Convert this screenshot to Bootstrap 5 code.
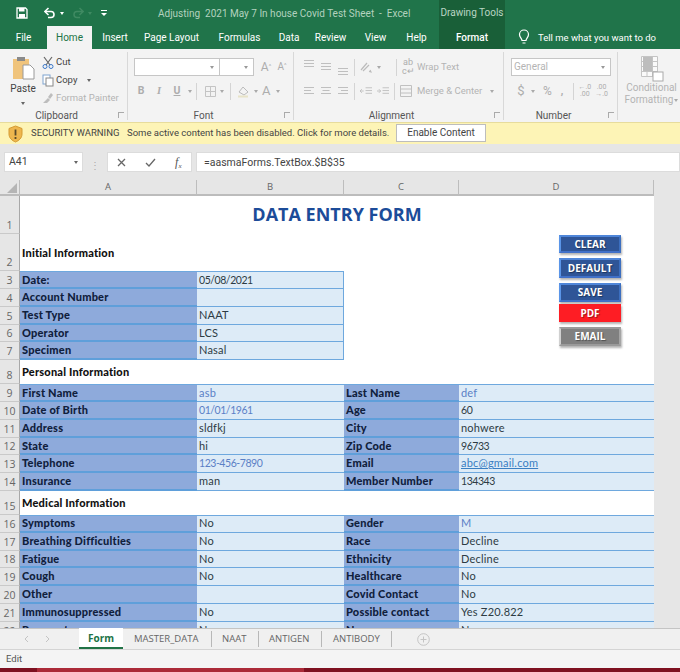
<!DOCTYPE html>
<html lang="en">
<head>
<meta charset="UTF-8">
<title>Adjusting 2021 May 7 In house Covid Test Sheet - Excel</title>
<link href="https://cdn.jsdelivr.net/npm/bootstrap@5.3.0/dist/css/bootstrap.min.css" rel="stylesheet">
<style>
  html, body { width: 680px; height: 672px; overflow: hidden; }
  body { font-family: Roboto, "Liberation Sans", sans-serif; font-size: 10px; color: #444; background: #e6e6e6; }
  svg { display: block; flex: none; }

  /* title + tabs */
  .xl-head { background: #20744a; color: #fff; height: 49px; }
  .xl-title { height: 26px; }
  .xl-qat { width: 439px; padding-left: 16px; }
  .xl-doc { color: #b3d2bf; font-size: 10px; margin-left: 50px; white-space: nowrap; }
  .xl-ctx { width: 66px; background: #195f38; color: #b9d5c4; font-size: 10px; text-align: center; line-height: 26px; white-space: nowrap; }
  .xl-tabs { height: 23px; font-size: 10px; }
  .xl-tab { line-height: 23px; text-align: center; flex: none; white-space: nowrap; }
  .xl-tab-on { background: #f3f3f3; color: #217346; }
  .xl-tab-ctx { background: #195f38; font-weight: 500; }
  .xl-bulb { margin-left: 13px; margin-top: 3px; }
  .xl-ask { font-size: 9.5px; }

  /* ribbon */
  .xl-ribbon { height: 73px; background: #f3f3f3; overflow: hidden; }
  .xl-group { position: relative; flex: none; height: 68px; margin-top: 3px; border-right: 1px solid #d8d8d8; }
  .xl-group-last { border-right: 0; }
  .xl-glabel { position: absolute; left: 0; right: 14px; top: 57px; text-align: center; font-size: 10px; color: #555; line-height: 14px; }
  .xl-launch { position: absolute; right: 3px; top: 60px; width: 6px; height: 6px; border-left: 1px solid #aaa; border-top: 1px solid #aaa; }
  .xl-off { color: #b4b4b4; }
  .xl-field { background: #fff; border: 1px solid #c6c6c6; height: 18px; position: relative; flex: none; }
  .xl-field::after { content: ""; position: absolute; right: 5px; top: 7px; border: 2.5px solid transparent; border-top: 3px solid #999; }
  .xl-rowtool { height: 18px; white-space: nowrap; }
  .xl-row2 { margin-top: 6px; }
  .xl-caret { flex: none; width: 0; height: 0; border: 2.5px solid transparent; border-top: 3px solid #a9a9a9; margin-top: 3px; }
  .xl-vsep { flex: none; width: 1px; height: 17px; background: #d4d4d4; }
  .xl-glyph { flex: none; color: #adadad; font-weight: 700; font-size: 10.5px; line-height: 18px; text-align: center; }
  .xl-clip-left { width: 38px; padding-top: 4px; }
  .xl-clip-items { padding-top: 1px; }
  .xl-clip-item { height: 18px; font-size: 9.5px; line-height: 18px; white-space: nowrap; gap: 2px; }
  .xl-align-tools { gap: 5px; }
  .xl-big { line-height: 12px; font-size: 10px; padding-left: 5px; white-space: nowrap; }
  .xl-big .xl-caret { display: inline-block; vertical-align: middle; margin: 2px 0 0 1px; }

  /* warning + formula */
  .xl-warn { height: 22px; background: #fdf4b6; font-size: 9.5px; color: #444; padding-left: 8px; border-top: 1px solid #e7dc9c; white-space: nowrap; }
  .xl-enable { width: 90px; height: 18px; line-height: 16px; background: #fff; border: 1px solid #bdbdbd; text-align: center; font-size: 10px; position: absolute; left: 396px; top: 124px; }
  .xl-formula { height: 36px; padding-top: 8px; background: #e6e6e6; }
  .xl-fbox { background: #fff; height: 20px; line-height: 20px; border: 1px solid #dcdcdc; font-size: 10.5px; flex: none; }
  .xl-ftext { padding-left: 7px; color: #444; }

  /* sheet */
  .xl-sheet-wrap { position: relative; height: 448px; overflow: hidden; }
  .xl-grid { table-layout: fixed; border-collapse: separate; border-spacing: 0; width: 654px; font-family: "Lato", "Liberation Sans", sans-serif; font-size: 11px; color: #222; }
  .xl-grid th { background: #e6e6e6; font-weight: 400; color: #666; text-align: center; font-family: "Open Sans", sans-serif; font-size: 9.5px; }
  .xl-grid thead th { height: 15px; padding: 0; border-right: 1px solid #bdbdbd; border-bottom: 2px solid #bcbcbc; }
  .xl-grid tbody th { vertical-align: bottom; padding: 0 0 1px; border-bottom: 1px solid #c9c9c9; border-right: 1px solid #a8a8a8; line-height: 13px; font-size: 10.5px; }
  .xl-grid td { padding: 0 2px; height: 17.8px; line-height: 14px; background: #fff; white-space: nowrap; overflow: hidden; letter-spacing: .2px; }
  .xl-grid td.xl-val { padding-bottom: 1px; }
  .xl-lbl { background: #8eaadb !important; font-weight: 900; color: #10203c; border-bottom: 2px solid #5f9fda; }
  .xl-val { background: #ddebf7 !important; border-bottom: 1px solid #6ea8de; color: #2d3b44; }
  .xl-val-b { border-right: 1px solid #6ea8de; }
  .xl-top td.xl-lbl, .xl-top td.xl-val { border-top: 1px solid #6ea8de; }
  .xl-blue { color: #5b80c6; }
  .xl-num { font-size: 10.5px; letter-spacing: -.45px !important; }
  .xl-sec { font-weight: 900; color: #111; }
  .xl-grid td.xl-h { text-align: center; font-size: 18px; font-weight: 700; color: #1c4c99; font-family: "Open Sans", sans-serif; letter-spacing: 0; padding-bottom: 2px; }
  .xl-mail { color: #3a7ec2; text-decoration: underline; }
  .xl-corner { position: absolute; left: 7px; top: 3px; border: 5px solid transparent; border-right-color: #b5b5b5; border-bottom-color: #b5b5b5; }
  .xl-side { position: absolute; left: 654px; right: 0; top: 0; bottom: 0; background: #e6e6e6; }

  /* form macro buttons float above the cells */
  .xl-mbtn { position: absolute; left: 559px; width: 62px; color: #fff; font-family: "Open Sans", sans-serif; font-size: 10px; font-weight: 700; text-align: center; text-shadow: 1px 1px 1px rgba(0,0,0,.4); border: 2px solid; border-color: #4f86d9 #3c6fc0 #4070c8 #5a95e8; background: #2f5597; box-shadow: 1px 2px 2px rgba(0,0,0,.3); }
  .xl-mbtn-red { background: #fe1d24; border-color: #fe1d24; }
  .xl-mbtn-gray { background: #808080; border-color: #9a9a9a #a5a5a5 #9a9a9a #d0d0d0; }

  /* sheet tabs + status */
  .xl-sheets { height: 22px; background: #f0f0f0; border-top: 1px solid #c4c4c4; border-bottom: 1px solid #d4d4d4; font-family: "Open Sans", sans-serif; font-size: 9.5px; color: #666; white-space: nowrap; }
  .xl-sheet-tab { height: 16px; line-height: 16px; flex: none; border-right: 1px solid #b8b8b8; }
  .xl-sheet-on { width: 44px; height: 21px; line-height: 20px; background: #fff; border-bottom: 2px solid #217346; color: #217346; font-weight: 700; font-size: 10px; text-align: center; margin-top: -1px; flex: none; }
  .xl-status { height: 18px; background: #f4f4f4; font-size: 9.5px; line-height: 18px; padding-left: 6px; color: #555; }
  .xl-strip { height: 4px; background: #7e1020; }
  .xl-strip-on { margin-left: 37px; width: 267px; height: 4px; background: #ab2a38; }
</style>
</head>
<body>

<div class="xl-head">
  <div class="xl-title d-flex align-items-center">
    <div class="xl-qat d-flex align-items-center">
      <svg width="12" height="12" viewBox="0 0 12 12"><path d="M1 1h8.500L11 2.500V11H1z" fill="none" stroke="#fff" stroke-width="1.300"/><rect x="3" y="1" width="5.500" height="3.500" fill="#fff"/><rect x="3" y="7" width="6" height="4" fill="#fff"/></svg>
      <svg class="ms-3" width="12" height="12" viewBox="0 0 12 12"><path d="M1.500 4.500H7a3 3 0 0 1 0 6H4" fill="none" stroke="#fff" stroke-width="1.600"/><path d="M4.500 1 .8 4.500 4.500 8" fill="none" stroke="#fff" stroke-width="1.600"/></svg>
      <span class="xl-caret ms-1" style="border-top-color:#fff"></span>
      <svg class="ms-2" width="12" height="12" viewBox="0 0 12 12"><path d="M10.500 4.500H5a3 3 0 0 0 0 6h3M7.500 1l3.700 3.500L7.500 8" fill="none" stroke="#3f8a62" stroke-width="1.500"/></svg>
      <span class="xl-caret ms-1" style="border-top-color:#3f8a62"></span>
      <svg class="ms-2" width="8" height="8" viewBox="0 0 8 8"><path d="M1 1.500h6" stroke="#fff"/><path d="M1 4h6L4 7z" fill="#fff"/></svg>
      <span class="xl-doc">Adjusting&nbsp; 2021 May 7 In house Covid Test Sheet&nbsp; -&nbsp; Excel</span>
    </div>
    <div class="xl-ctx">Drawing Tools</div>
  </div>
  <div class="xl-tabs d-flex">
    <div class="xl-tab" style="width:47px">File</div>
    <div class="xl-tab xl-tab-on" style="width:45px">Home</div>
    <div class="xl-tab" style="width:46px">Insert</div>
    <div class="xl-tab" style="width:67px">Page Layout</div>
    <div class="xl-tab" style="width:69px">Formulas</div>
    <div class="xl-tab" style="width:30px">Data</div>
    <div class="xl-tab" style="width:53px">Review</div>
    <div class="xl-tab" style="width:37px">View</div>
    <div class="xl-tab" style="width:45px">Help</div>
    <div class="xl-tab xl-tab-ctx" style="width:66px">Format</div>
    <svg class="xl-bulb" width="12" height="16" viewBox="0 0 12 16"><path d="M4 11.500C4 9.500 1.500 8.500 1.500 5.500a4.500 4.500 0 0 1 9 0c0 3-2.500 4-2.500 6z M4.500 14h3" fill="none" stroke="#fff" stroke-width="1.200"/></svg>
    <div class="xl-tab xl-ask ms-2">Tell me what you want to do</div>
  </div>
</div>

<div class="xl-ribbon d-flex">
  <!-- clipboard -->
  <div class="xl-group d-flex" style="width:128px">
    <div class="xl-clip-left d-flex flex-column align-items-center ms-1">
      <svg width="23" height="24" viewBox="0 0 23 24"><rect x="1" y="3" width="16" height="20" fill="#f0c47c"/><rect x="5" y="1" width="8" height="4" fill="#8a8a8a"/><path d="M11 9h7l4 4v10H11z" fill="#fff" stroke="#9a9a9a"/></svg>
      <span class="mt-1 lh-1">Paste</span>
      <span class="xl-caret mt-2" style="border-top-color:#666"></span>
    </div>
    <div class="xl-clip-items">
      <div class="xl-clip-item d-flex align-items-center"><svg width="12" height="13" viewBox="0 0 12 13"><path d="M2 1l6 8M10 1 4 9" stroke="#666" stroke-width="1.200"/><circle cx="3" cy="10.500" r="2" fill="none" stroke="#3c78c8"/><circle cx="9" cy="10.500" r="2" fill="none" stroke="#3c78c8"/></svg>Cut</div>
      <div class="xl-clip-item d-flex align-items-center"><svg width="12" height="13" viewBox="0 0 12 13"><rect x="1" y="1" width="7" height="9" fill="#fff" stroke="#7fa4cf"/><rect x="4" y="4" width="7" height="8" fill="#fff" stroke="#888"/></svg>Copy<span class="xl-caret ms-2" style="border-top-color:#666"></span></div>
      <div class="xl-clip-item d-flex align-items-center xl-off"><svg width="12" height="12" viewBox="0 0 12 12"><path d="M1 11l5-5 2 2-3 3zM6 5l3-4 2 2-3 4z" fill="#bdbdbd"/></svg>Format Painter</div>
    </div>
    <div class="xl-glabel">Clipboard</div><div class="xl-launch"></div>
  </div>
  <!-- font -->
  <div class="xl-group" style="width:166px;padding:6px 0 0 6px">
    <div class="d-flex align-items-center">
      <div class="xl-field" style="width:86px"></div><div class="xl-field" style="width:34px;border-left:0"></div>
      <span class="xl-glyph ms-1 xl-off" style="font-size:12px;font-weight:400;width:16px">A<sup style="font-size:6px">^</sup></span>
      <span class="xl-glyph xl-off" style="font-size:10px;font-weight:400;width:16px">A<sup style="font-size:6px">^</sup></span>
    </div>
    <div class="xl-rowtool xl-row2 d-flex align-items-center">
      <span class="xl-glyph" style="width:14px">B</span>
      <span class="xl-glyph fst-italic ms-1" style="width:14px;font-family:'Liberation Serif',serif">I</span>
      <span class="xl-glyph text-decoration-underline ms-1" style="width:14px">U</span>
      <span class="xl-caret ms-1"></span>
      <span class="xl-vsep ms-1"></span>
      <svg class="ms-2" width="11" height="11" viewBox="0 0 11 11"><path d="M.5.500h10v10H.5zM5.500.500v10M.5 5.500h10" fill="none" stroke="#c4c4c4"/></svg>
      <span class="xl-caret ms-1"></span>
      <span class="xl-vsep" style="margin-left:6px"></span>
      <svg style="margin-left:6px" width="13" height="13" viewBox="0 0 13 13"><path d="M2 7l4-5 5 5-4 3z" fill="none" stroke="#bbb"/><rect x="1" y="10.500" width="10" height="2" fill="#e8e3c8"/></svg>
      <span class="xl-caret ms-1"></span>
      <span class="xl-glyph ms-1" style="font-size:13px;font-weight:400">A</span>
      <span class="xl-caret" style="margin-left:6px"></span>
    </div>
    <div class="xl-glabel">Font</div><div class="xl-launch"></div>
  </div>
  <!-- alignment -->
  <div class="xl-group" style="width:210px;padding:6px 0 0 9px">
    <div class="xl-rowtool xl-align-tools d-flex align-items-center">
      <svg width="12" height="18" viewBox="0 0 12 18"><path d="M1 2.500h10M1 5.500h10M1 8.500h10" stroke="#bfbfbf"/></svg>
      <svg width="12" height="18" viewBox="0 0 12 18"><path d="M1 5.500h10M1 8.500h10M1 11.500h10" stroke="#bfbfbf"/></svg>
      <svg width="12" height="18" viewBox="0 0 12 18"><path d="M1 10.500h10M1 13.500h10M1 16.500h10" stroke="#bfbfbf"/></svg>
      <span class="xl-vsep"></span>
      <svg width="12" height="12" viewBox="0 0 12 12"><path d="M1 9l6-7M3 10l6-6M10 9l1 2-2-.500" fill="none" stroke="#bbb" stroke-width="1.200"/></svg>
      <span class="xl-caret"></span>
      <span class="xl-vsep" style="margin-left:10px"></span>
      <span class="xl-glyph" style="font-size:9px;line-height:9px;font-weight:400;width:12px">ab<br>c↵</span>
      <span class="xl-off" style="margin-left:-2px;font-size:9.5px">Wrap Text</span>
    </div>
    <div class="xl-rowtool xl-row2 xl-align-tools d-flex align-items-center">
      <svg width="12" height="10" viewBox="0 0 12 10"><path d="M1 1.500h10M1 4.500h7M1 7.500h10" stroke="#bfbfbf"/></svg>
      <svg width="12" height="10" viewBox="0 0 12 10"><path d="M1 1.500h10M2.500 4.500h7M1 7.500h10" stroke="#bfbfbf"/></svg>
      <svg width="12" height="10" viewBox="0 0 12 10"><path d="M1 1.500h10M4 4.500h7M1 7.500h10" stroke="#bfbfbf"/></svg>
      <span class="xl-vsep"></span>
      <svg width="12" height="10" viewBox="0 0 13 10"><path d="M6 1.500h7M6 4.500h7M6 7.500h7M4 5H0m2-2L0 5l2 2" fill="none" stroke="#bfbfbf"/></svg>
      <svg width="12" height="10" viewBox="0 0 13 10"><path d="M6 1.500h7M6 4.500h7M6 7.500h7M0 5h4M2 3l2 2-2 2" fill="none" stroke="#bfbfbf"/></svg>
      <span class="xl-vsep"></span>
      <svg width="12" height="12" viewBox="0 0 12 12"><path d="M.5.500h11v11H.5zM.5 4h11M.5 8h11" fill="none" stroke="#c0c0c0"/></svg>
      <span class="xl-off" style="font-size:9.5px">Merge &amp; Center</span>
      <span class="xl-caret" style="margin-left:3px"></span>
    </div>
    <div class="xl-glabel">Alignment</div><div class="xl-launch"></div>
  </div>
  <!-- number -->
  <div class="xl-group" style="width:114px;padding:6px 0 0 7px">
    <div class="xl-field xl-off" style="width:100px;padding-left:2px;line-height:16px;font-size:10px">General</div>
    <div class="xl-rowtool xl-row2 d-flex align-items-center ps-1">
      <span class="xl-glyph" style="font-size:13px;font-weight:400;width:12px">$</span>
      <span class="xl-caret ms-1"></span>
      <span class="xl-glyph ms-2" style="font-size:12px;font-weight:400">%</span>
      <span class="xl-glyph" style="margin-left:9px">,</span>
      <span class="xl-vsep" style="margin-left:10px"></span>
      <span class="xl-glyph ms-1" style="font-size:7px;line-height:7px;font-weight:400">←.0<br>.00</span>
      <span class="xl-glyph ms-1" style="font-size:7px;line-height:7px;font-weight:400">.00<br>→.0</span>
    </div>
    <div class="xl-glabel">Number</div><div class="xl-launch"></div>
  </div>
  <!-- conditional formatting, cut off by the window -->
  <div class="xl-group xl-group-last xl-big flex-grow-1 text-center xl-off pt-1">
    <svg class="mx-auto" width="24" height="26" viewBox="0 0 24 26"><path d="M1.500.500h16v20h-16zM1.500 5.500h16M1.500 10.500h16M1.500 15.500h16M7 .5v20M12.500.5v20" fill="#fafafa" stroke="#c4c4c4"/><rect x="3" y="1" width="9" height="14" fill="#bdbdbd"/><rect x="13" y="16" width="10" height="9" fill="#fff" stroke="#aaa"/></svg>
    <div>Conditional</div>
    <div>Formatting<span class="xl-caret"></span></div>
  </div>
</div>

<div class="xl-warn d-flex align-items-center">
  <svg width="15" height="18" viewBox="0 0 15 18"><path d="M7.500 1 14 3.500V9c0 4-3 6.500-6.500 8C4 15.500 1 13 1 9V3.500z" fill="#eeb64e" stroke="#d49b33"/><rect x="6.600" y="4.500" width="1.800" height="6" fill="#5a4a2a"/><rect x="6.600" y="12" width="1.800" height="2" fill="#5a4a2a"/></svg>
  <span class="ms-2" style="width:96px">SECURITY WARNING</span>
  <span>Some active content has been disabled. Click for more details.</span>
</div>
<div class="xl-enable">Enable Content</div>

<div class="xl-formula d-flex">
  <div class="xl-fbox d-flex justify-content-between align-items-center ms-1 px-1" style="width:79px">A41<span class="xl-caret" style="border-top-color:#666"></span></div>
  <div class="d-flex align-items-center justify-content-center" style="width:24px;color:#aaa;line-height:1">⋮</div>
  <div class="xl-fbox d-flex align-items-center justify-content-around" style="width:85px">
    <svg width="9" height="9" viewBox="0 0 9 9"><path d="M1 1l7 7M8 1 1 8" stroke="#666" stroke-width="1.300"/></svg>
    <svg width="11" height="9" viewBox="0 0 11 9"><path d="M1 5l3 3 6-7" fill="none" stroke="#666" stroke-width="1.300"/></svg>
    <span class="fst-italic" style="font-family:'Liberation Serif',serif;font-size:12px;color:#555">f<sub style="font-size:7px">x</sub></span>
  </div>
  <div class="xl-fbox xl-ftext flex-grow-1 ms-1">=aasmaForms.TextBox.$B$35</div>
</div>

<div class="xl-sheet-wrap">
  <table class="xl-grid">
    <colgroup><col style="width:20px"><col style="width:177px"><col style="width:147px"><col style="width:115px"><col style="width:195px"></colgroup>
    <thead><tr><th></th><th>A</th><th>B</th><th>C</th><th>D</th></tr></thead>
    <tbody>
      <tr><th style="height:38px">1</th><td colspan="4" class="xl-h">DATA ENTRY FORM</td></tr>
      <tr><th style="height:37px">2</th><td colspan="4" class="xl-sec">Initial Information</td></tr>
      <tr class="xl-top"><th>3</th><td class="xl-lbl">Date:</td><td class="xl-val xl-val-b xl-num">05/08/2021</td><td colspan="2"></td></tr>
      <tr><th>4</th><td class="xl-lbl">Account Number</td><td class="xl-val xl-val-b"></td><td colspan="2"></td></tr>
      <tr><th>5</th><td class="xl-lbl">Test Type</td><td class="xl-val xl-val-b">NAAT</td><td colspan="2"></td></tr>
      <tr><th>6</th><td class="xl-lbl">Operator</td><td class="xl-val xl-val-b">LCS</td><td colspan="2"></td></tr>
      <tr><th>7</th><td class="xl-lbl">Specimen</td><td class="xl-val xl-val-b">Nasal</td><td colspan="2"></td></tr>
      <tr><th style="height:24px">8</th><td colspan="4" class="xl-sec">Personal Information</td></tr>
      <tr class="xl-top"><th>9</th><td class="xl-lbl">First Name</td><td class="xl-val xl-blue">asb</td><td class="xl-lbl">Last Name</td><td class="xl-val xl-blue">def</td></tr>
      <tr><th>10</th><td class="xl-lbl">Date of Birth</td><td class="xl-val xl-blue xl-num">01/01/1961</td><td class="xl-lbl">Age</td><td class="xl-val xl-num">60</td></tr>
      <tr><th>11</th><td class="xl-lbl">Address</td><td class="xl-val">sldfkj</td><td class="xl-lbl">City</td><td class="xl-val">nohwere</td></tr>
      <tr><th>12</th><td class="xl-lbl">State</td><td class="xl-val">hi</td><td class="xl-lbl">Zip Code</td><td class="xl-val xl-num">96733</td></tr>
      <tr><th>13</th><td class="xl-lbl">Telephone</td><td class="xl-val xl-blue xl-num">123-456-7890</td><td class="xl-lbl">Email</td><td class="xl-val"><span class="xl-mail">abc@gmail.com</span></td></tr>
      <tr><th>14</th><td class="xl-lbl">Insurance</td><td class="xl-val">man</td><td class="xl-lbl">Member Number</td><td class="xl-val xl-num">134343</td></tr>
      <tr><th style="height:24px">15</th><td colspan="4" class="xl-sec">Medical Information</td></tr>
      <tr class="xl-top"><th>16</th><td class="xl-lbl">Symptoms</td><td class="xl-val">No</td><td class="xl-lbl">Gender</td><td class="xl-val xl-blue">M</td></tr>
      <tr><th>17</th><td class="xl-lbl">Breathing Difficulties</td><td class="xl-val">No</td><td class="xl-lbl">Race</td><td class="xl-val">Decline</td></tr>
      <tr><th>18</th><td class="xl-lbl">Fatigue</td><td class="xl-val">No</td><td class="xl-lbl">Ethnicity</td><td class="xl-val">Decline</td></tr>
      <tr><th>19</th><td class="xl-lbl">Cough</td><td class="xl-val">No</td><td class="xl-lbl">Healthcare</td><td class="xl-val">No</td></tr>
      <tr><th>20</th><td class="xl-lbl">Other</td><td class="xl-val"></td><td class="xl-lbl">Covid Contact</td><td class="xl-val">No</td></tr>
      <tr><th>21</th><td class="xl-lbl">Immunosuppressed</td><td class="xl-val">No</td><td class="xl-lbl">Possible contact</td><td class="xl-val">Yes Z20.822</td></tr>
      <tr><th>22</th><td class="xl-lbl">Pregnant</td><td class="xl-val">No</td><td class="xl-lbl">Nurse</td><td class="xl-val">No</td></tr>
    </tbody>
  </table>
  <div class="xl-corner"></div>
  <div class="xl-side"></div>
  <div class="xl-mbtn" style="top:55px;height:18px;line-height:14px">CLEAR</div>
  <div class="xl-mbtn" style="top:78px;height:20px;line-height:16px">DEFAULT</div>
  <div class="xl-mbtn" style="top:103px;height:19px;line-height:15px">SAVE</div>
  <div class="xl-mbtn xl-mbtn-red" style="top:124px;height:18px;line-height:14px">PDF</div>
  <div class="xl-mbtn xl-mbtn-gray" style="top:147px;height:19px;line-height:15px">EMAIL</div>
</div>

<div class="xl-sheets d-flex align-items-center">
  <svg class="ms-4" width="5" height="8" viewBox="0 0 5 8"><path d="M4 1 1 4l3 3" fill="none" stroke="#c4c4c4"/></svg>
  <svg class="ms-3" width="5" height="8" viewBox="0 0 5 8"><path d="M1 1l3 3-3 3" fill="none" stroke="#c4c4c4"/></svg>
  <div class="xl-sheet-on" style="margin-left:29px">Form</div>
  <div class="xl-sheet-tab" style="width:89px;padding-left:11px">MASTER_DATA</div>
  <div class="xl-sheet-tab" style="width:47px;padding-left:10px">NAAT</div>
  <div class="xl-sheet-tab" style="width:63px;padding-left:10px">ANTIGEN</div>
  <div class="xl-sheet-tab" style="width:70px;padding-left:11px">ANTIBODY</div>
  <svg style="margin-left:25px" width="13" height="13" viewBox="0 0 13 13"><circle cx="6.500" cy="6.500" r="5.800" fill="none" stroke="#c4c4c4"/><path d="M6.500 3.500v6M3.500 6.500h6" stroke="#c4c4c4"/></svg>
</div>
<div class="xl-status">Edit</div>
<div class="xl-strip"><div class="xl-strip-on"></div></div>

<script src="https://cdn.jsdelivr.net/npm/bootstrap@5.3.0/dist/js/bootstrap.bundle.min.js"></script>
</body>
</html>
